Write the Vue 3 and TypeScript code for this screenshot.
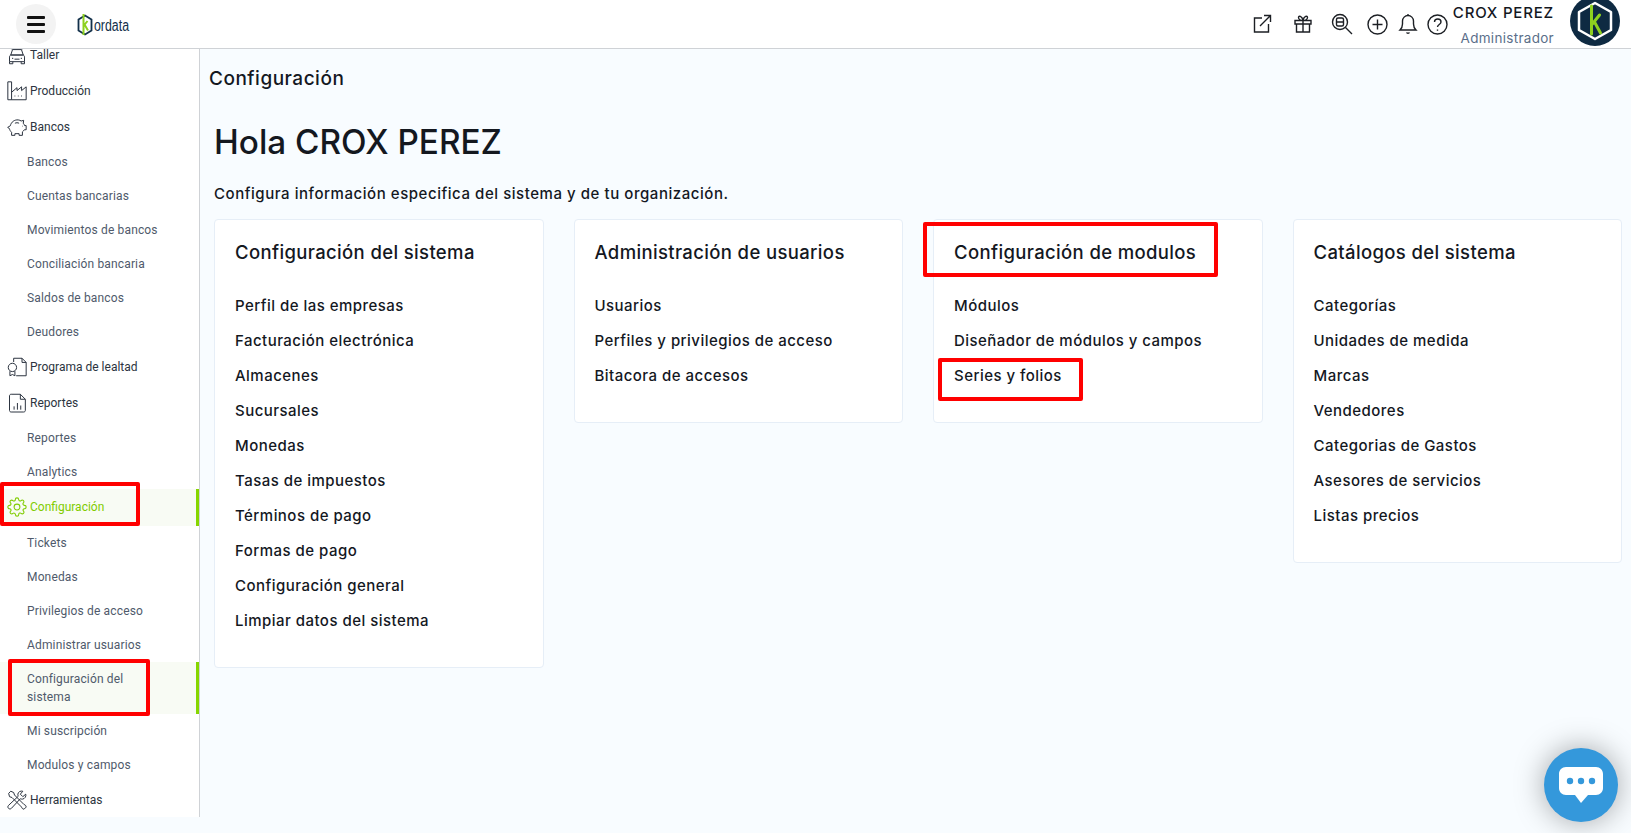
<script setup lang="ts">
type Row = { label: string; icon?: string; active?: boolean; bar?: boolean };

const icons: Record<string, string[]> = {
  car: [
    'M3 3l4 2.500h10L21 3M6.500 6L4.500 12h15l-2-6',
    'M3 14.500c0-1.500.8-2.500 2-2.500h14c1.200 0 2 1 2 2.500V20H3zM3 20v2.500h4V20M17 20v2.500h4V20M9 17h6',
    'M6 16h1.500M16.500 16H18',
  ],
  factory: [
    'M1 1h4.500v21.500H23V7l-5.500 4.500V7L12 11.500V8L5.500 13.500',
    'M1 1v21.500h4.500',
    'M9 18h1M13 18h1M17 18h1',
  ],
  piggy: [
    'M4 10.500C5 6 9 3 13.500 3.500c1.500.2 2.500.6 3.500 1.300L20 4l-.5 3.500c.8.8 1.300 1.800 1.600 2.800H23v5h-2.200c-.6 1-1.400 1.800-2.300 2.500V22h-4v-2H9.500v2h-4v-3.700C4 17 3.200 15.500 3 14L.8 12.500z',
    'M9.500 7.500c1.500-.8 3.500-.8 5 0M18 11h.6',
  ],
  cert: [
    'M8 6V1.500h10l5 5V22.500H11',
    'M18 1.500v5h5',
    'M6.500 7.500a5 5 0 1 0 0 10 5 5 0 0 0 0-10zM3.500 17v5.500l3-1.500 3 1.500V17',
  ],
  report: [
    'M3 3.500c0-1.200.8-2 2-2h11l6 6V21c0 1-.8 1.800-2 1.800H5c-1.200 0-2-.8-2-1.800z',
    'M16 1.500v6h6M8.500 20v-4M12.500 20v-8M16.500 20v-5',
  ],
  gear: [
    'M19.400 15a1.650 1.650 0 0 0 .33 1.820l.06.06a2 2 0 0 1 0 2.830 2 2 0 0 1-2.830 0l-.06-.06a1.650 1.650 0 0 0-1.820-.33 1.650 1.650 0 0 0-1 1.510V21a2 2 0 0 1-2 2 2 2 0 0 1-2-2v-.09A1.650 1.650 0 0 0 9 19.400a1.650 1.650 0 0 0-1.820.33l-.06.06a2 2 0 0 1-2.830 0 2 2 0 0 1 0-2.830l.06-.06a1.650 1.650 0 0 0 .33-1.820 1.650 1.650 0 0 0-1.510-1H3a2 2 0 0 1-2-2 2 2 0 0 1 2-2h.09A1.650 1.650 0 0 0 4.600 9a1.650 1.650 0 0 0-.33-1.820l-.06-.06a2 2 0 0 1 0-2.830 2 2 0 0 1 2.830 0l.06.06a1.650 1.650 0 0 0 1.820.33H9a1.650 1.650 0 0 0 1-1.510V3a2 2 0 0 1 2-2 2 2 0 0 1 2 2v.09a1.650 1.650 0 0 0 1 1.510 1.650 1.650 0 0 0 1.820-.33l.06-.06a2 2 0 0 1 2.830 0 2 2 0 0 1 0 2.830l-.06.06a1.650 1.650 0 0 0-.33 1.820V9a1.650 1.650 0 0 0 1.510 1H21a2 2 0 0 1 2 2 2 2 0 0 1-2 2h-.09a1.650 1.650 0 0 0-1.510 1z',
    'M12 8.500a3.500 3.500 0 1 0 0 7 3.500 3.500 0 0 0 0-7z',
  ],
  tools: [
    'M2 4l2.500-2.500L8 3l1 3 11.500 11.500c1.500.3 2.500 1.500 2.500 3l-2.500 2.500c-1.500 0-2.700-1-3-2.500L6 9 3 8z',
    'M22.500 5l-3.500 3-3-3 3-3.500c-2.500-.8-5.500.5-6 3.500 0 1 .2 1.800.5 2.500L1.800 18.500c-1 1-1 2.500 0 3.500s2.500 1 3.500 0L16 10.500c.8.3 1.500.5 2.500.5 3-.5 4.800-3.500 4-6z',
  ],
};

const rows: Row[] = [
  { label: 'Taller', icon: 'car' },
  { label: 'Producción', icon: 'factory' },
  { label: 'Bancos', icon: 'piggy' },
  { label: 'Bancos' },
  { label: 'Cuentas bancarias' },
  { label: 'Movimientos de bancos' },
  { label: 'Conciliación bancaria' },
  { label: 'Saldos de bancos' },
  { label: 'Deudores' },
  { label: 'Programa de lealtad', icon: 'cert' },
  { label: 'Reportes', icon: 'report' },
  { label: 'Reportes' },
  { label: 'Analytics' },
  { label: 'Configuración', icon: 'gear', active: true, bar: true },
  { label: 'Tickets' },
  { label: 'Monedas' },
  { label: 'Privilegios de acceso' },
  { label: 'Administrar usuarios' },
  { label: 'Configuración del\nsistema', bar: true },
  { label: 'Mi suscripción' },
  { label: 'Modulos y campos' },
  { label: 'Herramientas', icon: 'tools' },
];

const cards = [
  {
    title: 'Configuración del sistema',
    items: ['Perfil de las empresas', 'Facturación electrónica', 'Almacenes', 'Sucursales', 'Monedas', 'Tasas de impuestos', 'Términos de pago', 'Formas de pago', 'Configuración general', 'Limpiar datos del sistema'],
  },
  {
    title: 'Administración de usuarios',
    items: ['Usuarios', 'Perfiles y privilegios de acceso', 'Bitacora de accesos'],
  },
  {
    title: 'Configuración de modulos',
    items: ['Módulos', 'Diseñador de módulos y campos', 'Series y folios'],
  },
  {
    title: 'Catálogos del sistema',
    items: ['Categorías', 'Unidades de medida', 'Marcas', 'Vendedores', 'Categorias de Gastos', 'Asesores de servicios', 'Listas precios'],
  },
];

const marks = ['m1', 'm2', 'm3', 'm4'];
</script>

<template>
  <div class="page">
    <header class="top">
      <button class="burger" aria-label="Menú"><span></span><span></span><span></span></button>
      <svg class="logo" width="76" height="24" viewBox="0 0 76 24">
        <path d="M11 2.500l6.500 4v11l-6.500 4-6.500-4v-11z" fill="none" stroke="#12304a" stroke-width="1.800" />
        <path d="M9.500 1v21M9.500 13l4-5M10.500 11.500l3.500 6" fill="none" stroke="#8ed11f" stroke-width="2" />
        <text x="20" y="17.500" font-size="16" textLength="35" lengthAdjust="spacingAndGlyphs" class="logo-text">ordata</text>
      </svg>
      <div class="spacer"></div>
      <div class="tools">
        <svg class="ti t1" width="20" height="20" viewBox="0 0 20 20"><path d="M10 4H2.500v14h14v-8M8 12L18.500 1.500M12 1.500h6.500V8" /></svg>
        <svg class="ti t2" width="20" height="20" viewBox="0 0 20 20"><path d="M2 6.500h16v3.500H2zM3.500 10v8h13v-8M10 6.500V18M10 6.500C8 6.500 5.500 5.500 5.500 3.500S9 1.500 10 6.500zM10 6.500c2 0 4.500-1 4.500-3S11 1.500 10 6.500z" /></svg>
        <svg class="ti t3" width="22" height="22" viewBox="0 0 22 22"><circle cx="9" cy="9" r="7.500" /><rect x="5.500" y="5" width="7" height="8" rx="1.500" /><path d="M5.500 9h7M14.500 14.500l6.500 6.500" /></svg>
        <svg class="ti t4" width="21" height="21" viewBox="0 0 21 21"><circle cx="10.500" cy="10.500" r="9.500" /><path d="M10.500 5.500v10M5.500 10.500h10" /></svg>
        <svg class="ti t5" width="20" height="22" viewBox="0 0 20 22"><path d="M2 17c1.500-1.500 2.500-3 2.500-6V8c0-3 2.500-5.500 5.500-5.500s5.500 2.500 5.500 5.500v3c0 3 1 4.500 2.500 6zM10 1v1.500M8.500 19.500c.5 1 2.500 1 3 0" /></svg>
        <svg class="ti t6" width="21" height="21" viewBox="0 0 21 21"><circle cx="10.500" cy="10.500" r="9.500" /><path d="M7.500 8c0-4 6.500-4 6.500 0 0 2.500-3.500 2.500-3.500 5M10.500 15.500v1.200" /></svg>
      </div>
      <div class="who">
        <div class="name">CROX PEREZ</div>
        <div class="role">Administrador</div>
      </div>
      <svg class="avatar" width="50" height="50" viewBox="0 0 50 50">
        <circle cx="25" cy="25" r="25" fill="#0e2a42" />
        <path d="M25 7l16 9v18l-16 9-16-9V16z" fill="none" stroke="#fff" stroke-width="2.500" stroke-linejoin="round" />
        <path d="M21.500 10v28M21.500 29l8-10M24.500 26l6 11" fill="none" stroke="#8ed11f" stroke-width="3" stroke-linecap="round" />
      </svg>
    </header>

    <div class="body">
      <aside class="side">
        <nav class="nav">
          <a
            v-for="(r, i) in rows"
            :key="i"
            class="row"
            :class="{ main: r.icon, sub: !r.icon, active: r.active, bar: r.bar }"
          >
            <svg v-if="r.icon" class="ri" width="20" height="20" viewBox="0 0 24 24">
              <path v-for="(d, j) in icons[r.icon]" :key="j" :d="d" />
            </svg>
            <span class="lbl">{{ r.label }}</span>
          </a>
        </nav>
      </aside>

      <main class="main-col">
        <div class="crumb">Configuración</div>
        <h1 class="hello">Hola CROX PEREZ</h1>
        <p class="lead">Configura información especifica del sistema y de tu organización.</p>
        <section class="grid">
          <article v-for="c in cards" :key="c.title" class="card">
            <h2 class="card-title">{{ c.title }}</h2>
            <ul class="list">
              <li v-for="it in c.items" :key="it">{{ it }}</li>
            </ul>
          </article>
        </section>
      </main>
    </div>

    <div v-for="m in marks" :key="m" class="mark" :class="m"></div>

    <button class="chat" aria-label="Chat">
      <svg width="50" height="40" viewBox="0 0 50 40">
        <path d="M10 2h30c4 0 7 3 7 7v14c0 4-3 7-7 7H32l-7 8-6-8H10c-4 0-7-3-7-7V9c0-4 3-7 7-7z" fill="#fff" />
        <circle cx="14" cy="16" r="3.200" fill="#3498db" />
        <circle cx="25" cy="16" r="3.200" fill="#3498db" />
        <circle cx="36" cy="16" r="3.200" fill="#3498db" />
      </svg>
    </button>
  </div>
</template>

<style>
html,
body {
  margin: 0;
  background: #f8fcff;
}
</style>

<style scoped>
.page {
  position: relative;
  height: 833px;
  overflow: hidden;
  background: #f8fcff;
  font-family: Inter, "Noto Sans", sans-serif;
  color: #14181f;
}
.top {
  display: flex;
  align-items: center;
  height: 49px;
  box-sizing: border-box;
  border-bottom: 1px solid #cfd2d6;
  background: #fff;
  padding: 0 11px 0 16px;
  overflow: hidden;
}
.burger {
  width: 40px;
  height: 40px;
  border: 0;
  border-radius: 50%;
  background: #f3f3f3;
  display: flex;
  flex-direction: column;
  align-items: center;
  justify-content: center;
  gap: 4px;
  padding: 0;
}
.burger span {
  width: 18px;
  height: 3px;
  background: #111;
  border-radius: 1px;
}
.logo {
  margin-left: 18px;
  margin-top: 2px;
}
.logo-text {
  font-family: "Liberation Sans", sans-serif;
  fill: #12304a;
}
.spacer {
  flex: 1;
}
.tools {
  display: flex;
  align-items: center;
}
.ti {
  fill: none;
  stroke: #1c1f24;
  stroke-width: 1.400;
}
.t1 { margin-right: 21px; }
.t2 { margin-right: 18px; }
.t3 { margin-right: 14px; }
.t4 { margin-right: 10px; }
.t5 { margin-right: 9px; }
.who {
  margin-left: 5px;
  text-align: right;
}
.name {
  font-size: 15px;
  font-weight: 500;
  line-height: 22px;
  letter-spacing: 0.8px;
}
.role {
  font-size: 13.500px;
  line-height: 18px;
  color: #5b6f8a;
  margin-top: 5px;
  letter-spacing: 0.3px;
}
.avatar {
  margin-left: 16px;
  margin-top: -7px;
  flex: none;
}
.body {
  display: flex;
  align-items: flex-start;
}
.side {
  width: 200px;
  height: 768px;
  box-sizing: border-box;
  flex: none;
  background: #fff;
  border-right: 1px solid #cfd2d6;
  overflow: hidden;
}
.nav {
  display: flex;
  flex-direction: column;
  margin-top: -12.600px;
}
.row {
  display: flex;
  align-items: center;
  box-sizing: border-box;
  font-family: Roboto, sans-serif;
  font-size: 12px;
  line-height: 18px;
  position: relative;
}
.lbl {
  white-space: pre-line;
}
.row.main {
  min-height: 36.200px;
  padding-left: 7px;
  gap: 3px;
  color: #2c3440;
}
.row.sub {
  min-height: 34px;
  padding: 8px 8px 8px 27px;
  color: #4f5a6b;
  letter-spacing: 0.15px;
}
.row.bar {
  background: #f8fbf4;
}
.row.bar::after {
  content: "";
  position: absolute;
  right: 0;
  top: 0;
  bottom: 0;
  width: 3px;
  background: #86d600;
}
.row.active {
  color: #80cc00;
}
.ri {
  flex: none;
  fill: none;
  stroke: #2c3440;
  stroke-width: 1.200;
}
.active .ri {
  stroke: #80cc00;
  stroke-width: 1.300;
}
.main-col {
  flex: 1;
  min-width: 0;
  padding: 0 9px 0 14px;
}
.crumb {
  font-size: 19px;
  font-weight: 500;
  line-height: 24px;
  letter-spacing: 0.5px;
  margin: 18px 0 0 -5px;
}
.hello {
  font-size: 33.300px;
  font-weight: 500;
  line-height: 44px;
  margin: 29px 0 0;
}
.lead {
  font-size: 15px;
  font-weight: 500;
  line-height: 20px;
  letter-spacing: 0.55px;
  margin: 20px 0 0;
}
.grid {
  display: grid;
  grid-template-columns: repeat(4, 1fr);
  column-gap: 30px;
  align-items: start;
  margin-top: 15px;
}
.card {
  background: #fff;
  border: 1px solid #e6eef7;
  border-radius: 4px;
  padding: 21px 20px 29px;
}
.card-title {
  font-size: 18.500px;
  font-weight: 500;
  line-height: 22px;
  letter-spacing: 0.36px;
  margin: 0 0 25px;
}
.list {
  list-style: none;
  margin: 0;
  padding: 0;
}
.list li {
  font-size: 15px;
  font-weight: 500;
  line-height: 35px;
  letter-spacing: 0.47px;
}
.mark {
  position: absolute;
  box-sizing: border-box;
  border: 4px solid #f00;
  border-radius: 2px;
}
.m1 { left: 0; top: 482px; width: 140px; height: 44px; }
.m2 { left: 8px; top: 659px; width: 142px; height: 57px; }
.m3 { left: 923px; top: 222px; width: 295px; height: 55px; }
.m4 { left: 938px; top: 358px; width: 145px; height: 43px; }
.chat {
  position: absolute;
  left: 1544px;
  top: 748px;
  width: 74px;
  height: 74px;
  border: 0;
  border-radius: 50%;
  padding: 0;
  background: #3498db;
  box-shadow: 0 0 30px rgba(0, 0, 0, 0.35);
  display: flex;
  align-items: center;
  justify-content: center;
}
</style>
